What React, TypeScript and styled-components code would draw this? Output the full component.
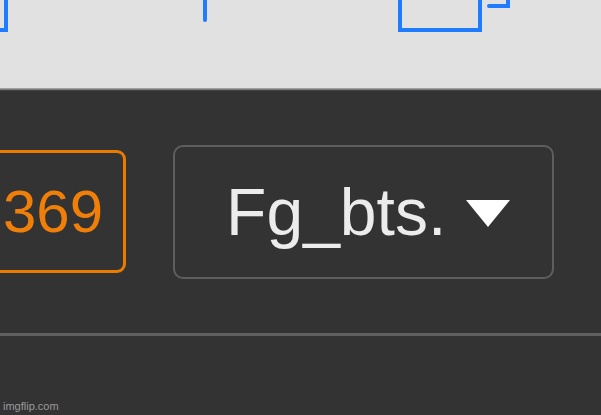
import styled, { createGlobalStyle } from "styled-components";

const GlobalStyle = createGlobalStyle`
  html, body {
    margin: 0;
    padding: 0;
    background: #333333;
  }
  body {
    font-family: "Liberation Sans", Arial, sans-serif;
  }
`;

const Screen = styled.div`
  width: 601px;
  height: 415px;
  display: flex;
  flex-direction: column;
  overflow: hidden;
  background: #333333;
`;

const Canvas = styled.div`
  height: 88px;
  flex-shrink: 0;
  background: #e1e1e1;
  overflow: hidden;
`;

const PaneDivider = styled.div`
  height: 3px;
  flex-shrink: 0;
  background: linear-gradient(#b4b4b4, #7a7a7a 50%, #2a2a2a);
`;

const Toolbar = styled.div`
  height: 241px;
  flex-shrink: 0;
  display: flex;
  align-items: center;
  gap: 47px;
`;

const Counter = styled.div`
  box-sizing: border-box;
  height: 123px;
  margin-left: -28px;
  padding: 0 20px 0 28px;
  display: flex;
  align-items: center;
  border: 3px solid #e97b00;
  border-radius: 9px;
  color: #f07f0a;
  font-size: 60px;
`;

const Select = styled.div`
  box-sizing: border-box;
  height: 134px;
  padding: 0 42px 0 51px;
  display: flex;
  align-items: center;
  gap: 20px;
  border: 2px solid #5e5e5e;
  border-radius: 10px;
  color: #ececec;
  font-size: 66px;
`;

const Caret = styled.span`
  width: 0;
  height: 0;
  margin-top: 4px;
  border-left: 22px solid transparent;
  border-right: 22px solid transparent;
  border-top: 27px solid #ffffff;
`;

const Rule = styled.div`
  height: 3px;
  margin-top: 1px;
  flex-shrink: 0;
  background: #606060;
`;

const Footer = styled.div`
  flex: 1;
  display: flex;
  align-items: flex-end;
  padding: 0 0 3px 3px;
`;

const Watermark = styled.span`
  font-size: 11px;
  color: #9a9a9a;
`;

function Shapes() {
  const blue = "#1f7bff";
  return (
    <svg width="601" height="88" viewBox="0 0 601 88">
      <g fill="none" stroke={blue} strokeWidth="4" strokeLinecap="round">
        <path d="M6 -4 V30 H-4" />
        <path d="M205 -4 V20" />
        <path d="M400 -4 V30 H480 V-4" />
        <path d="M489 6 H508 V-4" />
      </g>
    </svg>
  );
}

export default function App() {
  return (
    <>
      <GlobalStyle />
      <Screen>
        <Canvas>
          <Shapes />
        </Canvas>
        <PaneDivider />
        <Toolbar>
          <Counter>369</Counter>
          <Select>
            Fg_bts.
            <Caret />
          </Select>
        </Toolbar>
        <Rule />
        <Footer>
          <Watermark>imgflip.com</Watermark>
        </Footer>
      </Screen>
    </>
  );
}
